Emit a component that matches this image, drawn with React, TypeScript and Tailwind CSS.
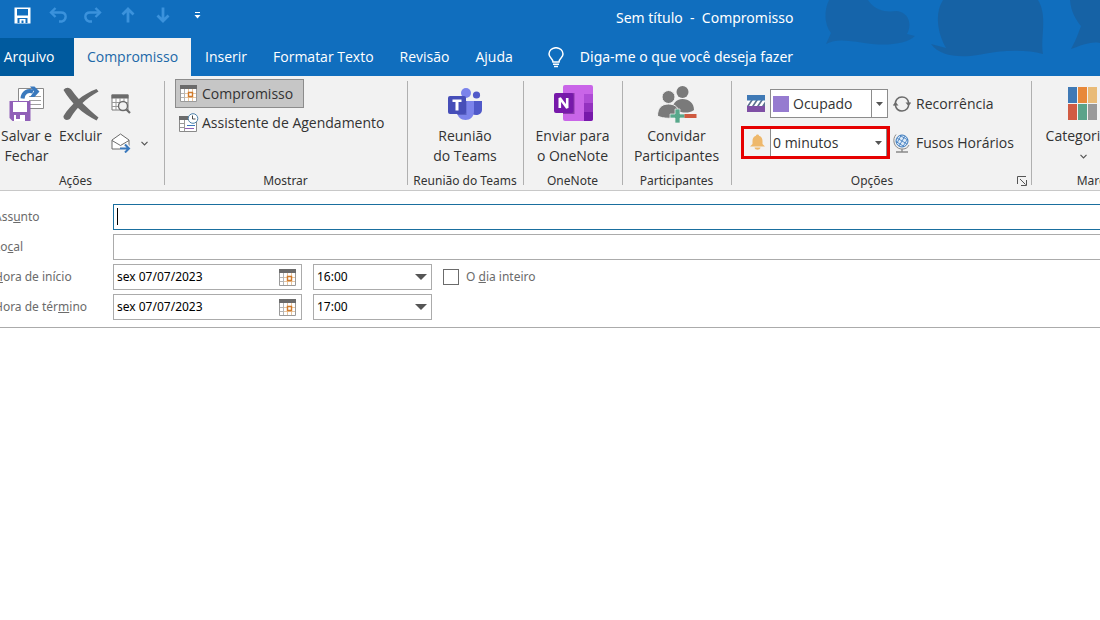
import type { ReactNode } from "react"

const tabs = ["Inserir", "Formatar Texto", "Revisão", "Ajuda"]

function SaveIcon() {
  return (
    <svg width="17" height="17" viewBox="0 0 17 17">
      <path d="M0.5 0.5h16v16h-16z" fill="#fff" />
      <path d="M3 2h11v6.5H3z" fill="#106ebe" />
      <path d="M3.5 11h10v5H3.5z" fill="#106ebe" />
      <path d="M5.5 12h6v4h-2v-2.500h-2V16h-2z" fill="#fff" />
    </svg>
  )
}

function UndoIcon({ flip = false }: { flip?: boolean }) {
  return (
    <svg width="18" height="16" viewBox="0 0 18 16" className={flip ? "-scale-x-100" : ""} fill="none" stroke="#3b92dc" strokeWidth="2.400">
      <path d="M6.5 1L2 5.5L6.5 10" />
      <path d="M2 5.5H12C18 5.5 18 12.5 13 14.5H10" />
    </svg>
  )
}

function ArrowIcon({ down = false }: { down?: boolean }) {
  return (
    <svg width="14" height="16" viewBox="0 0 14 16" className={down ? "rotate-180" : ""} fill="none" stroke="#3b92dc" strokeWidth="2.800">
      <path d="M7 15.5V2M1.5 7.5L7 2L12.5 7.5" />
    </svg>
  )
}

function MoreIcon() {
  return (
    <svg width="7" height="7" viewBox="0 0 7 7" fill="#fff">
      <path d="M1 0h5v1H1zM0.5 3h6L3.5 6.5z" />
    </svg>
  )
}

function BulbIcon() {
  return (
    <svg width="16" height="21" viewBox="0 0 16 21" fill="none" stroke="#fff" strokeWidth="1.5">
      <path d="M5 15C5 11.5 1 11 1 7A7 6.3 0 0 1 15 7C15 11 11 11.5 11 15z" />
      <path d="M5 17.2h6M6 19.6h4" />
    </svg>
  )
}

function SaveCloseIcon() {
  return (
    <svg width="36" height="36" viewBox="0 0 36 36">
      <path d="M9.5 2.5h25v20h-25z" fill="#fff" stroke="#8a8a8a" />
      <path d="M20 10.5h12M20 14.5h12M20 18.5h12" stroke="#a0a0a0" />
      <path d="M13.5 12.5C14 6 19 4 24 5.5" fill="none" stroke="#3a79bd" strokeWidth="4" />
      <path d="M21 0.500h4.500l5 5-5 5.500H21l4-5.500z" fill="#3a79bd" />
      <path d="M0.5 15h21v20h-18l-3-3z" fill="#9160b8" />
      <path d="M4 16h14v10H4z" fill="#fff" />
      <path d="M5 29h11v6H5z" fill="#fff" />
      <path d="M7 29h4v4H7z" fill="#9160b8" />
    </svg>
  )
}

function DeleteIcon() {
  return (
    <svg width="36" height="34" viewBox="0 0 36 34" fill="#6b6b6b">
      <path d="M0.500 3C3 0 6.500 0 9 3.500C15 12 24 21 35.500 30.500L33.500 33.500C20 27 8 16 0.500 3z" />
      <path d="M35.500 4.500L33.500 2C20 7 8 17 0.500 29C0 33 5 34.500 7.500 31C14 20 23 11.500 35.500 4.500z" />
    </svg>
  )
}

function CalendarSearchIcon() {
  return (
    <svg width="20" height="20" viewBox="0 0 20 20">
      <path d="M1 1h16v15H1z" fill="#fff" stroke="#7a7a7a" />
      <path d="M0.500 0.500h17v4h-17z" fill="#6b6b6b" />
      <path d="M1 8.500h16M1 12.500h16M5 4v12M9 4v12M13 4v12" stroke="#999" />
      <circle cx="12" cy="12" r="4.500" fill="#f2f2f2" stroke="#6b6b6b" strokeWidth="1.400" />
      <path d="M15.500 15.500L19 19" stroke="#6b6b6b" strokeWidth="2.200" />
    </svg>
  )
}

function ForwardIcon() {
  return (
    <svg width="20" height="20" viewBox="0 0 20 20" fill="none">
      <path d="M1 7L9.500 1L18 7V16H1z" fill="#fff" stroke="#6b6b6b" />
      <path d="M1 7.500L9.500 12.500L18 7.500" stroke="#6b6b6b" />
      <path d="M9 15.500h9M14 11l4.500 4.500L14 20" stroke="#f2f2f2" strokeWidth="4" />
      <path d="M9 15.500h9M14 11.500l4 4-4 4" stroke="#3a79bd" strokeWidth="2" />
    </svg>
  )
}

function Chevron() {
  return (
    <svg width="7" height="5" viewBox="0 0 7 5" fill="none" stroke="#555" strokeWidth="1.200">
      <path d="M0.500 0.800L3.500 3.800L6.500 0.800" />
    </svg>
  )
}

function CalendarIcon() {
  return (
    <svg width="17" height="17" viewBox="0 0 17 17" fill="none">
      <path d="M0.500 0.500h16v16H0.500z" fill="#fff" stroke="#9a9a9a" />
      <path d="M1 8.500h15M1 12.500h15M4.500 4v12M8.500 4v12M12.500 4v12" stroke="#b5b5b5" />
      <path d="M8.500 4v12M12.500 4v12M5 8.500h11M5 12.500h11" stroke="#e8c6a0" />
      <path d="M8.500 7.500h4v4h-4z" fill="#fff" stroke="#d07a2a" strokeWidth="1.400" />
      <path d="M0 0h17v4H0z" fill="#6b6b6b" />
    </svg>
  )
}

function SchedulingIcon() {
  return (
    <svg width="20" height="20" viewBox="0 0 20 20" fill="none">
      <path d="M0.500 3.500h17v15h-17z" fill="#fff" stroke="#8a8a8a" />
      <path d="M0 3h11v4H0z" fill="#6b6b6b" />
      <path d="M5.500 7v11M1 10.500h5M1 14.500h5" stroke="#9a9a9a" />
      <path d="M8 12.500h8" stroke="#3a79bd" />
      <path d="M6 15.500h9" stroke="#9160b8" />
      <circle cx="14" cy="5.500" r="4.800" fill="#fff" stroke="#4c7fa8" />
      <path d="M13.500 2.500v3.500h3" stroke="#4a4a4a" />
    </svg>
  )
}

function TeamsIcon() {
  return (
    <svg width="36" height="34" viewBox="0 0 36 34">
      <circle cx="29.500" cy="8" r="3.600" fill="#5059c9" />
      <path d="M24 14h11v8.500c0 4-3 5.500-6 5.500s-5-2-5-2z" fill="#5059c9" />
      <circle cx="19" cy="6" r="5" fill="#7b83eb" />
      <path d="M10 14h17v10c0 6-4 9-8.500 9S10 30 10 24z" fill="#7b83eb" />
      <path d="M10 14h9.500v14H10.600C10 26 10 14 10 14z" fill="#5a62c3" />
      <rect x="1" y="9" width="18" height="18" rx="2" fill="#464eb8" />
      <path d="M5.500 12.500h9v2.500h-3v8.500h-3V15h-3z" fill="#fff" />
    </svg>
  )
}

function OneNoteIcon() {
  return (
    <svg width="40" height="37" viewBox="0 0 40 37">
      <rect x="10" y="0" width="30" height="36" rx="2" fill="#c965e8" />
      <path d="M31 9h9v9h-9z" fill="#ae4bd5" />
      <path d="M31 18h9v9h-9z" fill="#9332bf" />
      <path d="M31 27h9v7c0 1-1 2-2 2h-7z" fill="#7719aa" />
      <path d="M10 8h11.500v21H10z" fill="#8a3aab" />
      <rect x="1" y="8" width="19.500" height="20" rx="2" fill="#7719aa" />
      <path d="M6.800 23V13L14.200 23V13" fill="none" stroke="#fff" strokeWidth="2.600" strokeLinejoin="bevel" />
    </svg>
  )
}

function InviteIcon() {
  return (
    <svg width="40" height="38" viewBox="0 0 40 38" fill="#7a7a7a">
      <circle cx="25.500" cy="7" r="6" />
      <path d="M15 27c0-8 4-13 10.500-13S37 18 37 25c-4 3-9 3-13 2z" />
      <circle cx="11.500" cy="12" r="6.500" stroke="#f2f2f2" />
      <path d="M0.500 31c0-8 4-12 11-12s11 4 11 12c-6 3-16 3-22 0z" stroke="#f2f2f2" />
      <path d="M18 24h5v5h5v4h-5v5h-5v-5h-5v-4h5z" fill="#58a88b" stroke="#f2f2f2" strokeWidth="0.700" />
      <path d="M27.500 29h12v4h-12z" fill="#cf5a40" />
    </svg>
  )
}

function ShowAsIcon() {
  return (
    <svg width="18" height="17" viewBox="0 0 18 17">
      <path d="M0 5h18v6H0z" fill="#fff" />
      <path d="M0 11l4-6h2l-4 6zM5 11l4-6h2l-4 6zM10 11l4-6h2l-4 6zM15 11l3-4.500V11z" fill="#5d7290" />
      <path d="M0 0h18v5.500H0z" fill="#3f79b5" />
      <path d="M0 11h18v6H0z" fill="#7f4fa5" />
    </svg>
  )
}

function BellIcon() {
  return (
    <svg width="15" height="17" viewBox="0 0 15 17" fill="#eeb86b">
      <path d="M7.500 0.500c1 0 1.500 0.700 1.500 1.300 2.500 0.700 3.500 2.700 3.500 5.200v3l2.500 2.500H0L2.500 10V7c0-2.500 1-4.500 3.500-5.200 0-0.600 0.500-1.300 1.500-1.300z" />
      <path d="M4.500 13.500h6c-0.500 3-5.500 3-6 0z" />
    </svg>
  )
}

function RecurrenceIcon() {
  return (
    <svg width="18" height="18" viewBox="0 0 18 18" fill="none" stroke="#6b6b6b" strokeWidth="1.500">
      <path d="M2.500 10.500C1.500 5 5 2 9 2C12 2 15 4 15.700 8" />
      <path d="M15.500 7.500C16.500 13 13 16 9 16C6 16 3 14 2.300 10" />
      <path d="M-0.500 10.500h6l-3-3.500z M18.500 7.500h-6l3 3.500z" fill="#6b6b6b" stroke="none" />
    </svg>
  )
}

function GlobeIcon() {
  return (
    <svg width="18" height="20" viewBox="0 0 18 20" fill="none">
      <circle cx="9" cy="8" r="6" fill="#dbe9f7" stroke="#3a79bd" />
      <path d="M4 5l10 6M7 2.500L15 7M3 8.500l8 5M12 3L6 13M8 2.500L4 10M14.500 6L10 13.500" stroke="#3a79bd" strokeWidth="0.800" />
      <path d="M3 1.500C-1 6 0.500 15 8 16C12.500 16.500 15 14.500 16 12" stroke="#8a8a8a" />
      <path d="M9 16v3M3 19h12" stroke="#8a8a8a" strokeWidth="1.400" />
    </svg>
  )
}

function CategoriesIcon() {
  return (
    <svg width="30" height="33" viewBox="0 0 30 33">
      <path d="M0 0h9v16H0z" fill="#3f79b5" />
      <path d="M10 0h9v16h-9z" fill="#e8883a" />
      <path d="M20 0h9v16h-9z" fill="#e9bb78" />
      <path d="M0 17h9v16H0z" fill="#d15b43" />
      <path d="M10 17h9v16h-9z" fill="#5ba38a" />
      <path d="M20 17h9v16h-9z" fill="#999" />
    </svg>
  )
}

function LauncherIcon() {
  return (
    <svg width="10" height="10" viewBox="0 0 10 10" fill="none" stroke="#555">
      <path d="M0.500 8V0.500H9M3 3l5.500 5.500M9.500 4v5.500H4" />
    </svg>
  )
}

function Triangle({ small = false }: { small?: boolean }) {
  return (
    <svg width={small ? 7 : 12} height={small ? 4 : 6} viewBox="0 0 12 6" preserveAspectRatio="none" fill="#555">
      <path d="M0 0h12L6 6z" />
    </svg>
  )
}

function Clouds() {
  return (
    <svg width="300" height="76" viewBox="0 0 300 76" className="absolute top-0 right-0" fill="#1761a3">
      <path opacity="0.75" d="M29 0C24 10 24 24 31 33L26 44C38 37 55 42 72 44C90 46 108 43 115 36L107 34C112 26 110 12 96 11C88 12 76 12 68 0z" />
      <path opacity="0.95" d="M143 0C134 14 138 34 146 48L131 44C140 56 158 58 178 55C202 50 225 49 243 54C240 38 248 16 238 0z" />
      <path opacity="0.95" d="M270 0C271 12 276 20 281 26C278 34 276 40 271 49C280 46 290 41 300 43V0z" />
    </svg>
  )
}

function Group({ label, className, launcher, children }: { label: string; className: string; launcher?: boolean; children: ReactNode }) {
  return (
    <section className={`relative flex shrink-0 flex-col justify-between ${className}`}>
      <div className="flex">{children}</div>
      <div className="flex h-[19px] items-center">
        <h2 className="flex-1 text-center font-['Noto_Sans',sans-serif] text-xs whitespace-nowrap">{label}</h2>
        {launcher && (
          <button aria-label="Mais opções" className="flex w-5 justify-center">
            <LauncherIcon />
          </button>
        )}
      </div>
      <span className="absolute top-[5px] right-0 bottom-[5px] w-px bg-[#b0b0b0]" />
    </section>
  )
}

function BigButton({ icon, lines, className = "" }: { icon: ReactNode; lines: string[]; className?: string }) {
  return (
    <button className={`flex flex-col items-center gap-1 pt-[9px] leading-5 whitespace-nowrap ${className}`}>
      <span className="flex h-[37px] items-center">{icon}</span>
      <span>
        {lines.map((line) => (
          <span key={line} className="block">{line}</span>
        ))}
      </span>
    </button>
  )
}

function DateField({ id, value }: { id: string; value: string }) {
  return (
    <div className="flex h-[26px] w-[189px] items-center border border-[#ababab] pr-[5px]">
      <input id={id} defaultValue={value} className="w-full min-w-0 flex-1 px-[3px] text-black outline-none" />
      <button type="button" aria-label="Escolher data">
        <CalendarIcon />
      </button>
    </div>
  )
}

function TimeSelect({ label, value }: { label: string; value: string }) {
  return (
    <div className="relative ml-[11px] h-[26px] w-[119px] border border-[#ababab]">
      <select aria-label={label} defaultValue={value} className="h-full w-full appearance-none px-[3px] text-black outline-none">
        <option>{value}</option>
      </select>
      <span className="pointer-events-none absolute inset-y-0 right-1 flex items-center">
        <Triangle />
      </span>
    </div>
  )
}

export default function App() {
  return (
    <div className="min-h-screen overflow-hidden bg-white font-['Open_Sans','Noto_Sans',sans-serif] text-sm text-[#333]">
      <header className="relative bg-[#106ebe] text-white">
        <Clouds />
        <div className="relative flex h-[38px]">
          <div className="flex h-[30px] w-[616px] items-center pl-[5px] *:flex *:w-[35px] *:justify-center">
            <button aria-label="Salvar"><SaveIcon /></button>
            <button aria-label="Desfazer"><UndoIcon /></button>
            <button aria-label="Refazer"><UndoIcon flip /></button>
            <button aria-label="Item anterior"><ArrowIcon /></button>
            <button aria-label="Próximo item"><ArrowIcon down /></button>
            <button aria-label="Personalizar"><MoreIcon /></button>
          </div>
          <h1 className="font-['Noto_Sans',sans-serif] leading-9 whitespace-pre">Sem título  -  Compromisso</h1>
        </div>
        <nav className="relative flex h-[38px] items-stretch whitespace-nowrap">
          <button className="w-[74px] bg-[#005a9e] pr-4 text-center">Arquivo</button>
          <button className="w-[117px] bg-[#f2f2f2] text-center text-[#2068a8]">Compromisso</button>
          <div className="flex gap-[26px] pl-[14px]">
            {tabs.map((tab) => (
              <button key={tab}>{tab}</button>
            ))}
          </div>
          <button className="ml-[35px] flex items-center gap-4 font-['Noto_Sans',sans-serif]">
            <BulbIcon />
            Diga-me o que você deseja fazer
          </button>
        </nav>
      </header>

      <div className="flex h-[115px] border-b border-[#c8c8c8] bg-[#f2f2f2]">
        <Group label="Ações" className="w-[165px] pr-[14px]">
          <BigButton icon={<SaveCloseIcon />} lines={["Salvar e", "Fechar"]} className="w-[53px]" />
          <BigButton icon={<DeleteIcon />} lines={["Excluir"]} className="w-[55px]" />
          <div className="flex flex-col gap-[19px] pt-[18px] pl-[3px]">
            <button aria-label="Calendário"><CalendarSearchIcon /></button>
            <button aria-label="Encaminhar" className="flex items-center gap-[10px]">
              <ForwardIcon />
              <Chevron />
            </button>
          </div>
        </Group>

        <Group label="Mostrar" className="w-[243px] pr-[2px]">
          <div className="flex flex-col items-start pt-[3px] pl-[10px]">
            <button className="flex h-[29px] w-[129px] items-center gap-[5px] border border-[#8c8c8c] bg-[#c6c6c6] pl-1">
              <CalendarIcon />
              Compromisso
            </button>
            <button className="flex h-[29px] items-center gap-[3px] pl-1 whitespace-nowrap">
              <SchedulingIcon />
              Assistente de Agendamento
            </button>
          </div>
        </Group>

        <Group label="Reunião do Teams" className="w-[116px] pr-[2px]">
          <BigButton icon={<TeamsIcon />} lines={["Reunião", "do Teams"]} className="w-full" />
        </Group>
        <Group label="OneNote" className="w-[99px] pr-[2px]">
          <BigButton icon={<OneNoteIcon />} lines={["Enviar para", "o OneNote"]} className="w-full" />
        </Group>
        <Group label="Participantes" className="w-[109px] pr-[2px]">
          <BigButton icon={<InviteIcon />} lines={["Convidar", "Participantes"]} className="w-full" />
        </Group>

        <Group label="Opções" className="w-[300px]" launcher>
          <div className="flex flex-col gap-[6px] pt-[11px] pl-[9px]">
            <div className="flex h-[33px] items-center">
              <label htmlFor="show-as" aria-label="Mostrar como" className="flex w-[29px] justify-center">
                <ShowAsIcon />
              </label>
              <div className="relative flex h-[29px] w-[118px] items-center border border-[#8c8c8c] bg-white">
                <span className="pointer-events-none absolute left-[2px] size-4 bg-[#967bd0]" />
                <select id="show-as" className="h-full w-full appearance-none pl-[22px] outline-none">
                  <option>Ocupado</option>
                </select>
                <span className="pointer-events-none absolute inset-y-0 right-0 flex w-4 items-center justify-center border-l border-[#8c8c8c]">
                  <Triangle small />
                </span>
              </div>
              <button className="ml-[5px] flex items-center gap-[5px]">
                <RecurrenceIcon />
                Recorrência
              </button>
            </div>
            <div className="flex h-[33px] items-center">
              <div className="flex h-full w-[149px] items-center border-3 border-[#e60000]">
                <label htmlFor="reminder" aria-label="Lembrete" className="flex w-[26px] justify-center">
                  <BellIcon />
                </label>
                <div className="relative h-full flex-1 border-x border-[#8c8c8c] bg-white">
                  <select id="reminder" className="h-full w-full appearance-none pl-[2px] outline-none">
                    <option>0 minutos</option>
                  </select>
                  <span className="pointer-events-none absolute inset-y-0 right-0 flex w-4 items-center justify-center">
                    <Triangle small />
                  </span>
                </div>
              </div>
              <button className="ml-[3px] flex items-center gap-[5px]">
                <GlobeIcon />
                Fusos Horários
              </button>
            </div>
          </div>
        </Group>

        <Group label="Marcas" className="w-[130px]">
          <div className="ml-[11px] flex w-[80px] flex-col items-center gap-2">
            <BigButton icon={<CategoriesIcon />} lines={["Categorizar"]} />
            <Chevron />
          </div>
        </Group>
      </div>

      <form className="-ml-[6px] border-b border-[#ababab] pt-[13px] pb-[7px] font-['Noto_Sans',sans-serif] text-xs text-[#6b6b6b]">
        <div className="grid grid-cols-[119px_1fr] items-center gap-y-1">
          <label htmlFor="subject">Ass<u>u</u>nto</label>
          <div className="relative -mr-1 h-[26px] border border-[#1a6f9f]">
            <input id="subject" className="h-full w-full px-[3px] caret-transparent outline-none" />
            <span className="absolute top-[3px] left-[3px] h-[17px] w-px bg-black" />
          </div>

          <label htmlFor="location">Lo<u>c</u>al</label>
          <input id="location" className="-mr-1 h-[26px] border border-[#ababab] px-[3px] outline-none" />

          <label htmlFor="start"><u>H</u>ora de início</label>
          <div className="flex items-center">
            <DateField id="start" value="sex 07/07/2023" />
            <TimeSelect label="Hora de início" value="16:00" />
            <input id="all-day" type="checkbox" className="ml-[11px] size-4 appearance-none border border-[#6b6b6b]" />
            <label htmlFor="all-day" className="ml-[7px]">O <u>d</u>ia inteiro</label>
          </div>

          <label htmlFor="end">Hora de tér<u>m</u>ino</label>
          <div className="flex items-center">
            <DateField id="end" value="sex 07/07/2023" />
            <TimeSelect label="Hora de término" value="17:00" />
          </div>
        </div>
      </form>
    </div>
  )
}
